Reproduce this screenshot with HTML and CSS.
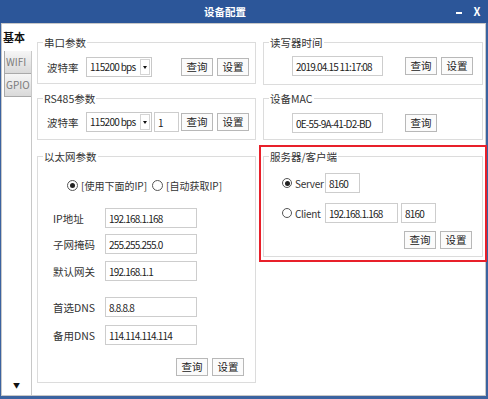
FILE: index.html
```html
<!DOCTYPE html>
<html lang="zh-CN">
<head>
    <meta charset="UTF-8">
    <title>设备配置</title>
    <link rel="stylesheet" href="styles.css">
</head>
<body>
    <div class="titlebar">
        <span class="title">设备配置</span>
        <span class="win-btn win-min"></span>
        <span class="win-btn">X</span>
    </div>

    <div class="frame">
        <div class="client">
            <div class="tabs">
                <div class="tab active">基本</div>
                <div class="tab">WIFI</div>
                <div class="tab">GPIO</div>
                <div class="tab-scroll">▼</div>
            </div>

            <div class="panel">
                <!-- left column -->
                <div class="col col-left">
                    <fieldset class="group">
                        <legend>串口参数</legend>
                        <div class="group-body serial-body">
                            <div class="row">
                                <span class="label baud-label">波特率</span>
                                <div class="select"><span class="select-value">115200 bps</span><span class="select-arrow"></span></div>
                                <span class="spacer"></span>
                                <button class="btn">查询</button>
                                <button class="btn">设置</button>
                            </div>
                        </div>
                    </fieldset>

                    <fieldset class="group rs485">
                        <legend>RS485参数</legend>
                        <div class="group-body rs485-body">
                            <div class="row">
                                <span class="label baud-label">波特率</span>
                                <div class="select"><span class="select-value">115200 bps</span><span class="select-arrow"></span></div>
                                <input class="field addr-field" type="text" value="1">
                                <span class="spacer"></span>
                                <button class="btn">查询</button>
                                <button class="btn">设置</button>
                            </div>
                        </div>
                    </fieldset>

                    <fieldset class="group ethernet">
                        <legend>以太网参数</legend>
                        <div class="group-body eth-body">
                            <div class="radio-row">
                                <label class="option option-manual"><span class="radio checked"></span>[使用下面的IP]</label>
                                <label class="option"><span class="radio"></span>[自动获取IP]</label>
                            </div>
                            <div class="row form-row ip-row">
                                <span class="label form-label">IP地址</span>
                                <input class="field form-field" type="text" value="192.168.1.168">
                            </div>
                            <div class="row form-row mask-row">
                                <span class="label form-label">子网掩码</span>
                                <input class="field form-field" type="text" value="255.255.255.0">
                            </div>
                            <div class="row form-row gw-row">
                                <span class="label form-label">默认网关</span>
                                <input class="field form-field" type="text" value="192.168.1.1">
                            </div>
                            <div class="row form-row dns1-row">
                                <span class="label form-label">首选DNS</span>
                                <input class="field form-field" type="text" value="8.8.8.8">
                            </div>
                            <div class="row form-row dns2-row">
                                <span class="label form-label">备用DNS</span>
                                <input class="field form-field" type="text" value="114.114.114.114">
                            </div>
                            <div class="btn-row eth-btns">
                                <button class="btn">查询</button>
                                <button class="btn">设置</button>
                            </div>
                        </div>
                    </fieldset>
                </div>

                <!-- right column -->
                <div class="col col-right">
                    <fieldset class="group">
                        <legend>读写器时间</legend>
                        <div class="group-body time-body">
                            <div class="row">
                                <input class="field wide-field" type="text" value="2019.04.15 11:17:08">
                                <span class="spacer"></span>
                                <button class="btn">查询</button>
                                <button class="btn">设置</button>
                            </div>
                        </div>
                    </fieldset>

                    <fieldset class="group mac">
                        <legend>设备MAC</legend>
                        <div class="group-body mac-body">
                            <div class="row">
                                <input class="field wide-field" type="text" value="0E-55-9A-41-D2-BD">
                                <span class="spacer"></span>
                                <button class="btn">查询</button>
                            </div>
                        </div>
                    </fieldset>

                    <div class="highlight">
                        <fieldset class="group">
                            <legend>服务器/客户端</legend>
                            <div class="group-body net-body">
                                <div class="row">
                                    <label class="option net-option"><span class="radio checked"></span>Server</label>
                                    <input class="field port-field" type="text" value="8160">
                                </div>
                                <div class="row client-row">
                                    <label class="option net-option"><span class="radio"></span>Client</label>
                                    <input class="field host-field" type="text" value="192.168.1.168">
                                    <input class="field port-field port-gap" type="text" value="8160">
                                </div>
                                <div class="btn-row net-btns">
                                    <button class="btn">查询</button>
                                    <button class="btn">设置</button>
                                </div>
                            </div>
                        </fieldset>
                    </div>
                </div>
            </div>
        </div>
    </div>
</body>
</html>
```

FILE: styles.css
```css
* {
    margin: 0;
    padding: 0;
    box-sizing: border-box;
    font-family: "Noto Sans CJK SC", "Noto Sans", sans-serif;
}

body {
    width: 488px;
    height: 399px;
    background-color: white;
    overflow: hidden;
    color: #222;
}

/* window chrome */
.titlebar {
    height: 23px;
    background-color: #2c5699;
    color: white;
    display: flex;
    align-items: center;
    padding-right: 2px;
}

.title {
    flex: 1;
    text-align: center;
    font-size: 10.5px;
    font-weight: bold;
    line-height: 23px;
}

.win-btn {
    width: 18px;
    text-align: center;
    font-size: 11px;
    font-weight: bold;
    line-height: 23px;
}

.win-min::before {
    content: "";
    display: inline-block;
    width: 6px;
    height: 2px;
    background-color: white;
    vertical-align: middle;
}

.frame {
    height: 376px;
    border-left: 1px solid #3b63a0;
    border-right: 2px solid #3b63a0;
    border-bottom: 3px solid #3b63a0;
}

.client {
    height: 100%;
    display: flex;
    border: 1px solid #c8c8c8;
}

/* side tabs */
.tabs {
    width: 29px;
    display: flex;
    flex-direction: column;
}

.tab {
    margin-left: 2px;
    height: 24px;
    border: 1px solid #a9a9a9;
    border-right: none;
    background: linear-gradient(#f6f6f6, #d9d9d9);
    color: #7a7a7a;
    font-size: 10px;
    line-height: 22px;
    padding-left: 1px;
}

.tab + .tab {
    margin-top: -1px;
}

.tab.active {
    position: relative;
    z-index: 1;
    margin-left: 0;
    margin-right: -1px;
    height: 27px;
    border: none;
    background: white;
    color: #111;
    font-size: 11px;
    font-weight: bold;
    line-height: 26px;
    padding-left: 1px;
}

.tab-scroll {
    margin-top: auto;
    text-align: center;
    font-size: 7px;
    line-height: 8px;
    padding-bottom: 6px;
    color: #111;
}

/* main panel */
.panel {
    flex: 1;
    display: flex;
    gap: 7px;
    border-left: 1px solid #c8c8c8;
    padding: 11px 2px 0 5px;
}

.col-left {
    width: 219px;
}

.col-right {
    width: 220px;
}

.group {
    border: 1px solid #dcdcdc;
    min-width: 0;
}

.group legend {
    margin-left: 5px;
    padding: 0 1px;
    font-size: 10.5px;
    line-height: 15px;
    color: #333;
}

.row {
    display: flex;
    align-items: center;
    height: 20px;
}

.spacer {
    flex: 1;
}

.label {
    font-size: 10.5px;
    color: #333;
    white-space: nowrap;
}

.field {
    height: 20px;
    border: 1px solid #cdcdcd;
    background-color: white;
    padding: 0 3px;
    font-size: 10px;
    letter-spacing: -0.8px;
    color: #222;
    outline: none;
}

.btn {
    width: 32px;
    height: 18px;
    border: 1px solid #b8b8b8;
    background-color: #fbfbfb;
    font-size: 10.5px;
    line-height: 16px;
    color: #222;
}

.btn + .btn {
    margin-left: 4px;
}

.btn-row {
    display: flex;
    justify-content: flex-end;
    height: 17px;
    align-items: center;
}

/* serial / rs485 */
.serial-body {
    padding: 7px 6px 6px 9px;
}

.rs485 {
    margin-top: 7px;
}

.rs485-body {
    padding: 6px 6px 7px 9px;
}

.baud-label {
    width: 39px;
}

.select {
    width: 66px;
    height: 20px;
    display: flex;
    border: 1px solid #c8c8c8;
    background-color: white;
}

.select-value {
    flex: 1;
    font-size: 10px;
    letter-spacing: -0.7px;
    line-height: 18px;
    padding-left: 3px;
    white-space: nowrap;
}

.select-arrow {
    width: 10px;
    margin: 1px 1px 1px 0;
    border: 1px solid #d4d4d4;
    display: flex;
    align-items: center;
    justify-content: center;
}

.select-arrow::after {
    content: "";
    border-left: 2px solid transparent;
    border-right: 2px solid transparent;
    border-top: 3px solid #111;
}

.addr-field {
    width: 25px;
    margin-left: 2px;
    margin-right: 2px;
}

/* ethernet */
.ethernet {
    margin-top: 9px;
}

.eth-body {
    padding: 14px 11px 7px 15px;
}

.radio-row {
    display: flex;
    align-items: center;
    height: 14px;
    padding-left: 14px;
}

.option {
    display: flex;
    align-items: center;
    gap: 3px;
    font-size: 10px;
    color: #333;
    white-space: nowrap;
}

.option-manual {
    width: 85px;
}

.radio {
    width: 11px;
    height: 11px;
    border: 1px solid #555;
    border-radius: 50%;
    background-color: white;
    display: flex;
    align-items: center;
    justify-content: center;
    flex-shrink: 0;
}

.radio.checked::after {
    content: "";
    width: 5px;
    height: 5px;
    border-radius: 50%;
    background-color: #222;
}

.form-label {
    width: 52px;
}

.form-field {
    width: 92px;
}

.ip-row { margin-top: 16px; }
.mask-row { margin-top: 6px; }
.gw-row { margin-top: 7px; }
.dns1-row { margin-top: 16px; }
.dns2-row { margin-top: 8px; }
.eth-btns { margin-top: 13px; }

/* right column */
.time-body {
    padding: 6px 9px 8px 28px;
}

.wide-field {
    width: 91px;
}

.mac {
    margin-top: 6px;
}

.mac-body {
    padding: 7px 45px 6px 28px;
}

.highlight {
    margin: 5px -4px 0 -4px;
    border: 2px solid #e8202a;
    padding: 2px 2px 3px 2px;
}

.net-body {
    padding: 9px 10px 8px 18px;
}

.net-option {
    width: 43px;
    letter-spacing: -0.3px;
}

.net-option .radio {
    width: 10px;
    height: 10px;
}

.port-field {
    width: 35px;
}

.host-field {
    width: 73px;
}

.port-gap {
    margin-left: 3px;
}

.client-row {
    margin-top: 10px;
}

.net-btns {
    margin-top: 8px;
}
```
